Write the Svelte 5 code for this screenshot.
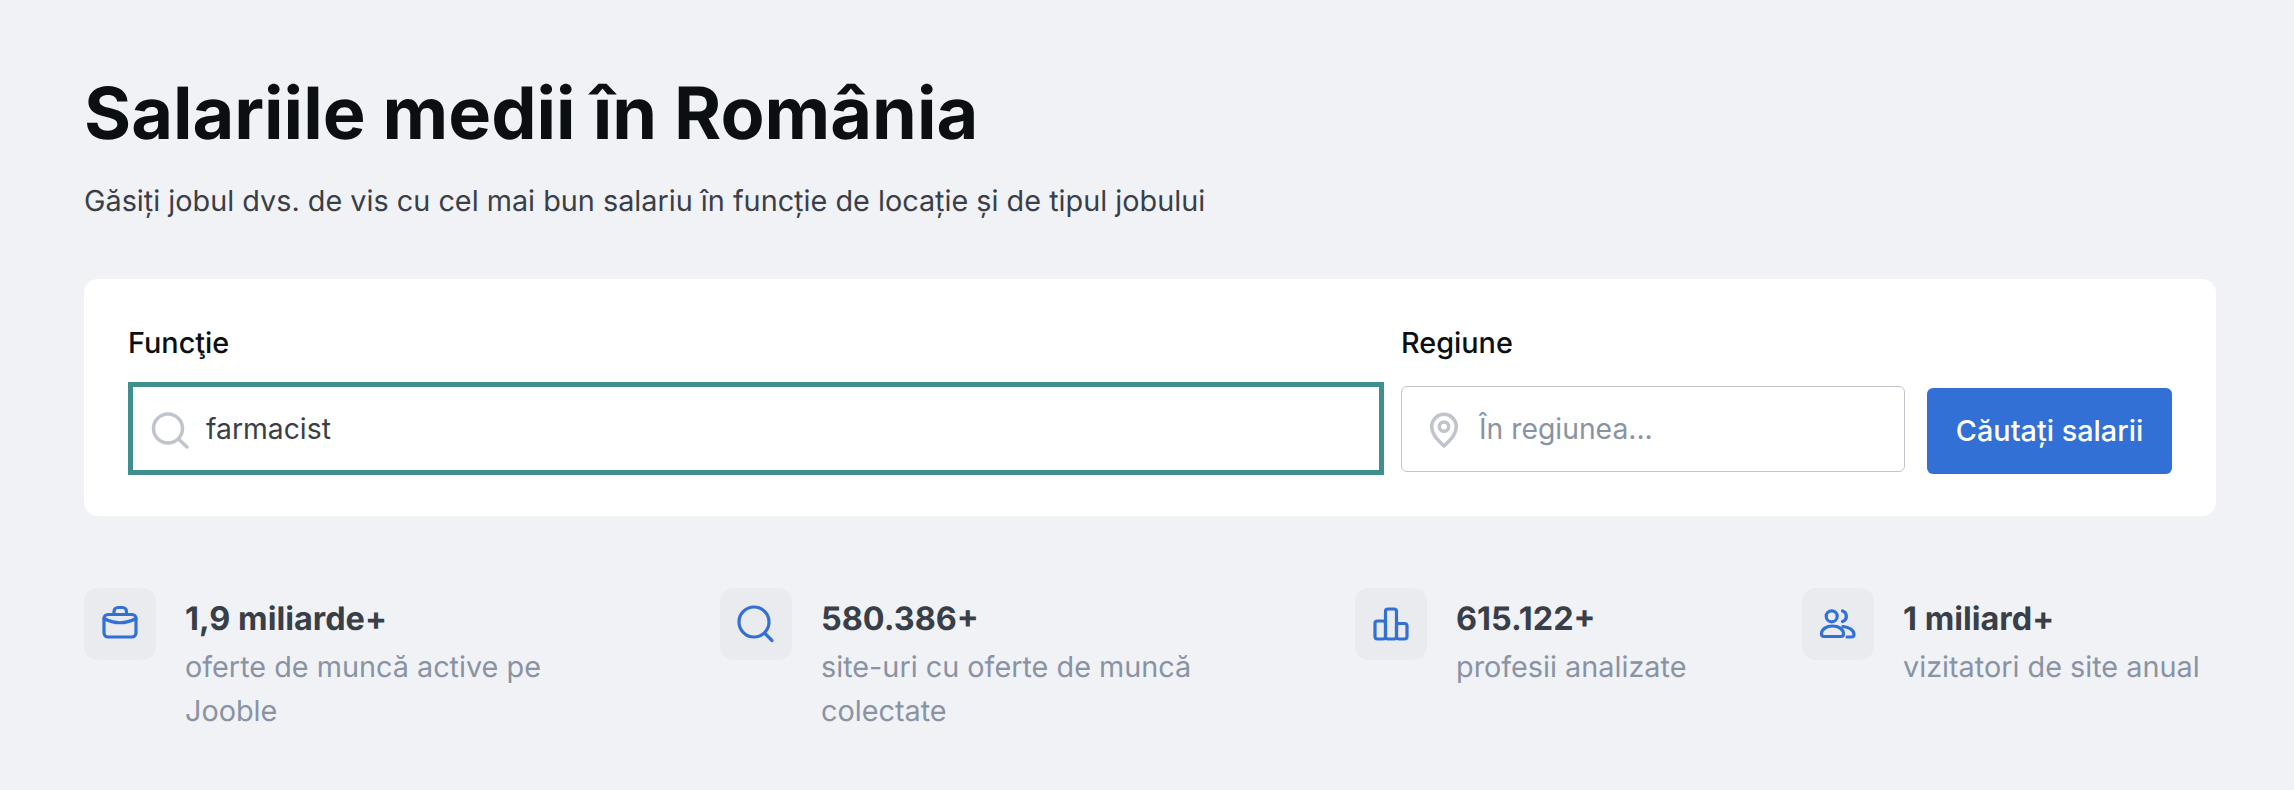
<script>
let stats = [
    { icon: "case", title: "1,9 miliarde+", text: "oferte de muncă active pe Jooble" },
    { icon: "search", title: "580.386+", text: "site-uri cu oferte de muncă colectate" },
    { icon: "bars", title: "615.122+", text: "profesii analizate" },
    { icon: "users", title: "1 miliard+", text: "vizitatori de site anual" }
];
</script>

<div class="page">
    <h1>Salariile medii în România</h1>
    <p class="lead">Găsiți jobul dvs. de vis cu cel mai bun salariu în funcție de locație și de tipul jobului</p>

    <form class="card" on:submit|preventDefault>
        <label class="label" for="job">Funcţie</label>
        <label class="label" for="region">Regiune</label>
        <span></span>

        <div class="box box-focus">
            <svg width="40" height="40" viewBox="0 0 40 40" fill="none" stroke="#c0c5cd" stroke-width="3.5" stroke-linecap="round">
                <circle cx="18" cy="19.5" r="14.5" />
                <path d="M29 30.5 37 38" />
            </svg>
            <input id="job" type="text" value="farmacist" />
        </div>
        <div class="box">
            <svg width="40" height="40" viewBox="0 0 40 40" fill="none" stroke="#c0c5cd" stroke-width="3.500" stroke-linejoin="round">
                <path d="M20 37C15 32 7.7 26 7.7 17.6a12.3 12.3 0 0 1 24.6 0C32.3 26 25 32 20 37z" />
                <circle cx="20" cy="17.6" r="4.700" />
            </svg>
            <input id="region" type="text" placeholder="În regiunea..." />
        </div>
        <button type="submit">Căutați salarii</button>
    </form>

    <div class="stats">
        {#each stats as stat}
            <div class="stat">
                <div class="stat-icon">
                    <svg width="72" height="72" viewBox="0 0 72 72" fill="none" stroke="#3370d6" stroke-width="3.2" stroke-linecap="round" stroke-linejoin="round">
                        {#if stat.icon === "case"}
                            <rect x="20" y="26.5" width="32" height="22.5" rx="4" />
                            <path d="M30 26v-2.5a4 4 0 0 1 4-4h4.5a4 4 0 0 1 4 4V26" />
                            <path d="M20 30.5Q36 39 52 30.5" />
                        {:else if stat.icon === "search"}
                            <circle cx="34" cy="34" r="15" />
                            <path d="M45 45.5 52 52.5" />
                        {:else if stat.icon === "bars"}
                            <rect x="20" y="33" width="10.5" height="18" rx="2.5" />
                            <rect x="30.5" y="21" width="11" height="30" rx="2.5" />
                            <rect x="41.5" y="35.5" width="10.5" height="15.5" rx="2.5" />
                        {:else}
                            <circle cx="29.7" cy="28.3" r="5.5" />
                            <path d="M19.5 46c0-5 5-8 11-8s11 3 11 8c0 1.5-1 2.5-2.5 2.5h-17c-1.500 0-2.500-1-2.500-2.500z" />
                            <path d="M40.500 23a5.500 5.500 0 0 1 0 10.500" />
                            <path d="M41 38.500c6 .5 11 3.500 11 8 0 1.500-1 2.500-2.500 2.500H45" />
                        {/if}
                    </svg>
                </div>
                <div class="stat-body">
                    <div class="stat-title">{stat.title}</div>
                    <div class="stat-text">{stat.text}</div>
                </div>
            </div>
        {/each}
    </div>
</div>

<style>
:global(body) {
    background-color: #f0f2f6;
}

.page {
    padding: 70px 78px 0 84px;
    font-family: Inter, "Liberation Sans", sans-serif;
    text-rendering: geometricPrecision;
}

h1 {
    margin: 0;
    font-size: 72px;
    line-height: 88px;
    font-weight: 700;
    color: #0c0f12;
}

.lead {
    margin: 25px 0 0;
    font-size: 28.8px;
    line-height: 36px;
    color: #3a3f47;
}

.card {
    margin-top: 60px;
    padding: 44px 44px 0;
    height: 237px;
    box-sizing: border-box;
    display: grid;
    grid-template-columns: 1fr 504px 250px;
    grid-template-rows: 40px 93px;
    column-gap: 17px;
    row-gap: 19px;
    align-items: center;
    background-color: #ffffff;
    border-radius: 14px;
}

.label {
    font-size: 28.8px;
    line-height: 36px;
    font-weight: 500;
    color: #0c0f12;
}

.box {
    height: 86px;
    padding-left: 22px;
    box-sizing: border-box;
    display: flex;
    align-items: center;
    gap: 15px;
    background-color: #ffffff;
    border: 1px solid #c0c5cd;
    border-radius: 6px;
}

.box-focus {
    height: 93px;
    padding-left: 17px;
    gap: 16px;
    border: 5px solid #408f8f;
    border-radius: 0;
}

.box input {
    flex: 1;
    min-width: 0;
    padding: 0;
    border: none;
    outline: none;
    font-family: inherit;
    font-size: 28.3px;
    color: #3a3f47;
    background: transparent;
}

.box input::placeholder {
    color: #8a93a3;
    opacity: 1;
}

button {
    height: 86px;
    margin: 4px 0 0 5px;
    padding: 0;
    width: 245px;
    font-family: inherit;
    font-size: 28.8px;
    font-weight: 500;
    color: #ffffff;
    background-color: #3370d6;
    border: none;
    border-radius: 6px;
}

.stats {
    margin-top: 72px;
    display: grid;
    grid-template-columns: 636px 635px 447px 1fr;
}

.stat {
    display: flex;
    gap: 29px;
}

.stat-icon {
    width: 72px;
    height: 72px;
    flex: none;
    background-color: #e9ebef;
    border-radius: 14px;
}

.stat-body {
    max-width: 400px;
}

.stat-title {
    margin-top: 9px;
    font-size: 32.4px;
    line-height: 44px;
    font-weight: 700;
    color: #393f48;
}

.stat-text {
    margin-top: 4px;
    font-size: 28.8px;
    line-height: 44px;
    color: #8a93a3;
}
</style>
